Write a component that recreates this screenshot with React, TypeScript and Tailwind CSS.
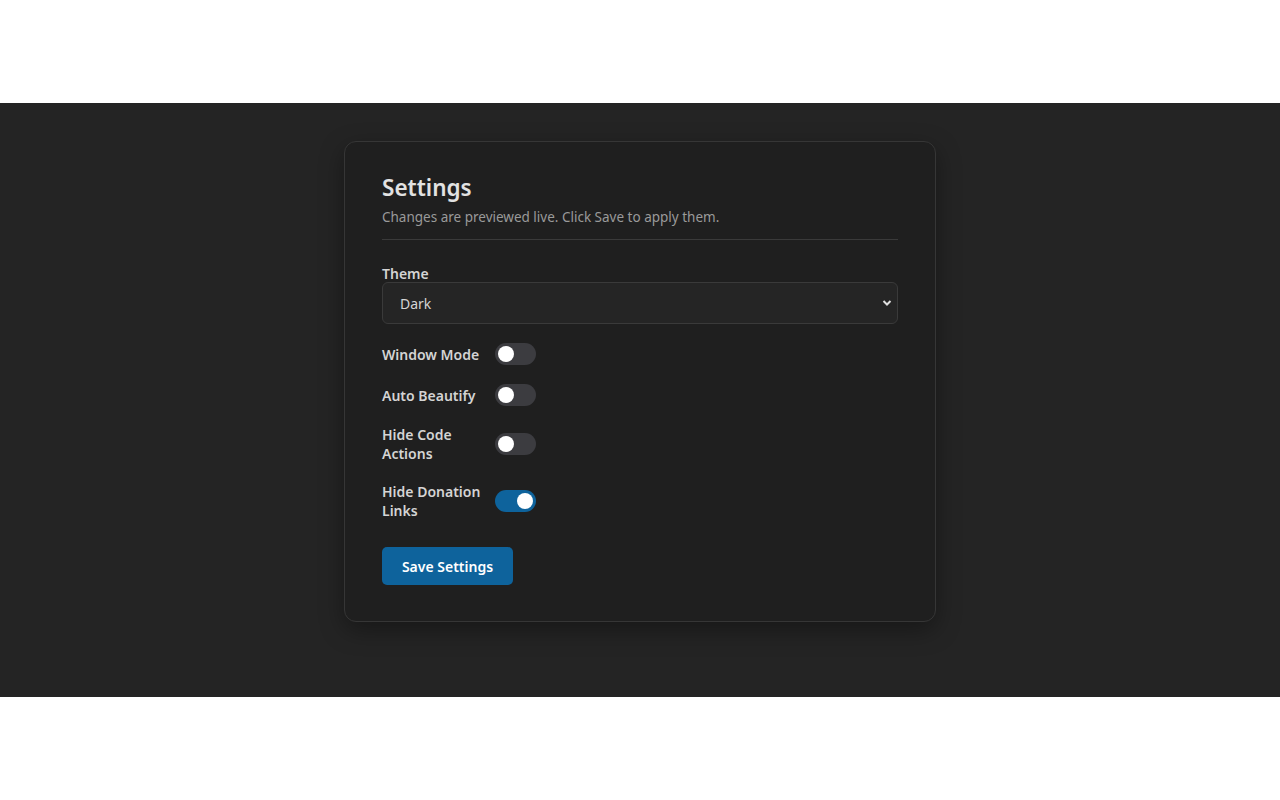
import React, { useState } from 'react';

const font = { fontFamily: '"Noto Sans", "Open Sans", Arial, sans-serif' };

interface ToggleRowProps {
  label: string;
  checked: boolean;
  onChange: () => void;
}

const ToggleRow: React.FC<ToggleRowProps> = ({ label, checked, onChange }) => (
  <div className="flex items-center gap-[12px]">
    <span className="w-[101px] text-[14px] leading-[19px] font-semibold text-[#d4d4d4]">{label}</span>
    <button
      onClick={onChange}
      className={`relative h-[22px] w-[41px] shrink-0 rounded-full ${checked ? 'bg-[#0e639c]' : 'bg-[#3c3c40]'}`}
    >
      <span
        className={`absolute top-[3px] h-[16px] w-[16px] rounded-full bg-white ${checked ? 'left-[22px]' : 'left-[3px]'}`}
      />
    </button>
  </div>
);

export default function App() {
  const [opts, setOpts] = useState({ window: false, beautify: false, actions: false, donation: true });

  return (
    <div className="flex h-[800px] w-full flex-col justify-center bg-white" style={font}>
      <div className="flex h-[594px] w-full justify-center bg-[#242424] pt-[38px]">
        <div className="h-[481px] w-[592px] rounded-[12px] border border-[#363636] bg-[#1f1f1f] px-[37px] pt-[31px] shadow-[0_8px_24px_rgba(0,0,0,0.35)]">
          <h1 className="text-[22.5px] leading-[30px] font-semibold text-[#e2e2e2]">Settings</h1>
          <p className="mt-[5px] text-[13.5px] leading-[19px] text-[#9a9a9a]">Changes are previewed live. Click Save to apply them.</p>
          <div className="mt-[12px] h-px bg-[#3a3a3a]" />

          <div className="mt-[24px] text-[14px] leading-[19px] font-semibold text-[#d4d4d4]">Theme</div>
          <div className="relative mt-[-1px] flex h-[42px] items-center rounded-[6px] border border-[#3a3a3a] bg-[#252525] pl-[17px] text-[14px] text-[#d4d4d4]">
            Dark
            <svg className="absolute right-[5px] top-[15px]" width="10" height="10" viewBox="0 0 10 10">
              <path d="M1.5 3 L5 6.5 L8.5 3" fill="none" stroke="#e0e0e0" strokeWidth="2" />
            </svg>
          </div>

          <div className="mt-[19px] flex flex-col gap-[19px]">
            <ToggleRow label="Window Mode" checked={opts.window} onChange={() => setOpts({ ...opts, window: !opts.window })} />
            <ToggleRow label="Auto Beautify" checked={opts.beautify} onChange={() => setOpts({ ...opts, beautify: !opts.beautify })} />
            <ToggleRow label="Hide Code Actions" checked={opts.actions} onChange={() => setOpts({ ...opts, actions: !opts.actions })} />
            <ToggleRow label="Hide Donation Links" checked={opts.donation} onChange={() => setOpts({ ...opts, donation: !opts.donation })} />
          </div>

          <button className="mt-[27px] h-[38px] w-[131px] rounded-[5px] bg-[#0e639c] text-[14px] font-semibold text-white">
            Save Settings
          </button>
        </div>
      </div>
    </div>
  );
}
